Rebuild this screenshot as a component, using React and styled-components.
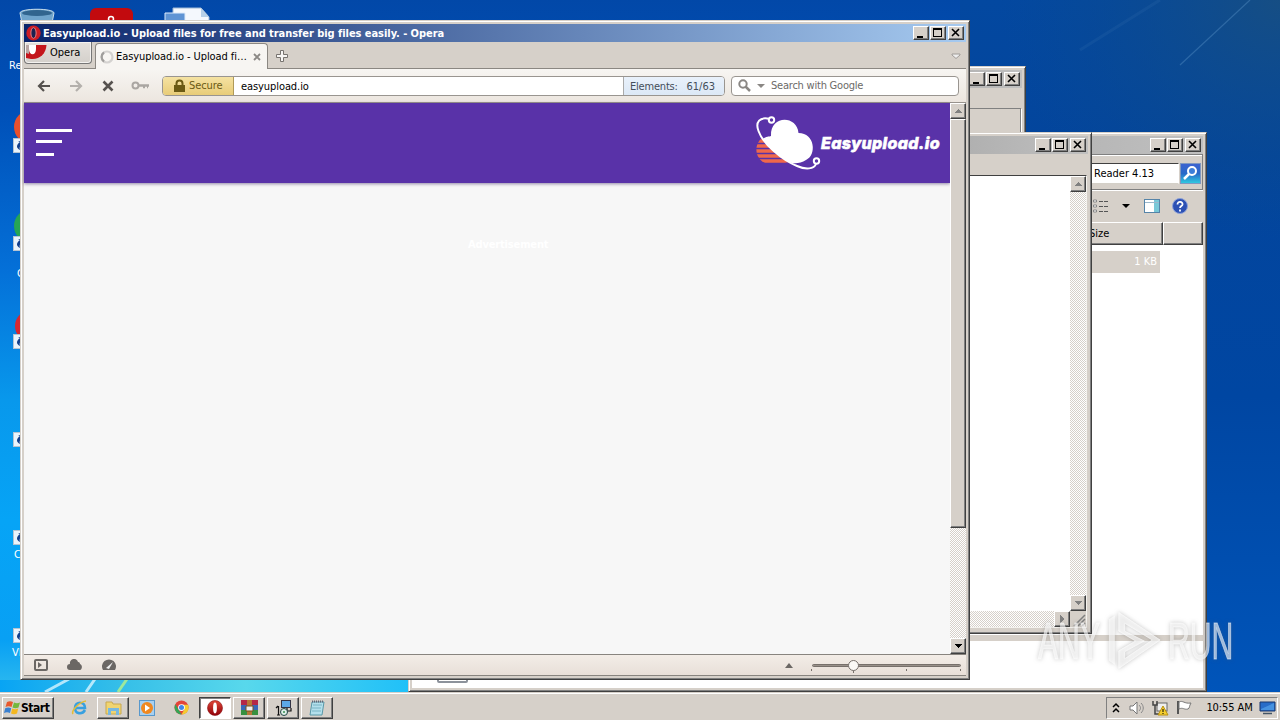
import React from 'react';
import styled, { createGlobalStyle, css } from 'styled-components';

const Global = createGlobalStyle`
  * { box-sizing: border-box; }
  html, body { margin: 0; width: 1280px; height: 720px; overflow: hidden; }
  body { font-family: "DejaVu Sans Condensed", "DejaVu Sans", sans-serif; font-size: 11px; color: #000; }
  svg { display: block; flex: none; }
`;

const FACE = '#d6d0c9';

const raised = css`
  background: ${FACE};
  border: 1px solid;
  border-color: #fff #404040 #404040 #fff;
  box-shadow: inset -1px -1px 0 #808080;
`;

const Screen = styled.div`
  position: relative;
  width: 1280px;
  height: 720px;
  overflow: hidden;
  display: flex;
  flex-direction: column;
  justify-content: flex-end;
  background: linear-gradient(180deg, #0248a8 0px, #0050b8 110px, #0470d8 270px, #0898ec 400px, #06a4f6 520px, #08a0f4 640px, #30bcee 692px);
`;
const Wallpaper = styled.svg`position: absolute; inset: 0;`;

const Window = styled.section`
  position: absolute;
  left: ${p => p.$x}px;
  top: ${p => p.$y}px;
  width: ${p => p.$w}px;
  height: ${p => p.$h}px;
  display: flex;
  flex-direction: column;
  padding: 2px;
  background: ${FACE};
  border: 1px solid;
  border-color: ${FACE} #404040 #404040 ${FACE};
  box-shadow: inset 1px 1px 0 #fff, inset -1px -1px 0 #808080;
  overflow: hidden;
`;
const Inner = styled.div`
  flex: 1;
  min-height: 0;
  display: flex;
  flex-direction: column;
  padding: 1px;
`;
const TitleBar = styled.header`
  height: 18px;
  flex: none;
  display: flex;
  align-items: center;
  padding: 0 2px;
  background: ${p => p.$active ? 'linear-gradient(90deg, #0a246a, #a6caf0)' : 'linear-gradient(90deg, #808080, #c0c0c0)'};
  color: #fff;
  font-weight: bold;
`;
const Title = styled.h1`
  flex: 1;
  margin: 0 0 0 2px;
  font: inherit;
  letter-spacing: -0.05px;
  white-space: nowrap;
`;
const Controls = styled.div`display: flex; margin-left: auto;`;
const ControlBtn = styled.button`
  ${raised}
  width: 16px;
  height: 14px;
  padding: 0;
  margin-left: ${p => p.$gap || 0}px;
`;

function WindowControls() {
  return (
    <Controls>
      <ControlBtn><svg width="14" height="12"><path d="M3 9h6v2H3z" /></svg></ControlBtn>
      <ControlBtn $gap={1}><svg width="14" height="12"><path d="M2 1h9v9H2zM3 3v6h7V3z" fillRule="evenodd" /></svg></ControlBtn>
      <ControlBtn $gap={2}><svg width="14" height="12"><path d="M3 2l7 7M10 2l-7 7" stroke="#000" strokeWidth="1.6" /></svg></ControlBtn>
    </Controls>
  );
}

const Label = styled.span`
  white-space: nowrap;
  letter-spacing: ${p => p.$ls || 0}px;
  color: ${p => p.$color || '#000'};
`;

/* tabs */
const TabStrip = styled.nav`
  height: 27px;
  flex: none;
  display: flex;
  align-items: flex-end;
  border-bottom: 1px solid #8b8782;
  background: ${FACE};
`;
const OperaButton = styled.button`
  align-self: flex-start;
  width: 68px;
  height: 22px;
  padding: 0 0 1px;
  display: flex;
  align-items: center;
  gap: 3px;
  border: 1px solid #777;
  border-top: 0;
  border-radius: 0 0 4px 4px;
  background: linear-gradient(#e4e0dc, #d4d0cb);
  box-shadow: inset 0 0 0 1px #f4f2f0;
  font: inherit;
`;
const Tab = styled.div`
  width: 173px;
  height: 26px;
  margin: 0 0 -1px 3px;
  display: flex;
  align-items: center;
  padding-left: 4px;
  gap: 2px;
  border: 1px solid #8b8782;
  border-bottom: 0;
  border-radius: 4px 4px 0 0;
  background: #f7f5f2;
`;
const Spacer = styled.div`flex: 1;`;
const Slot = styled.div`
  display: flex;
  align-items: center;
  justify-content: center;
  width: ${p => p.$w}px;
  height: ${p => p.$h || 24}px;
  flex: none;
`;

/* toolbar */
const AddressRow = styled.div`
  height: 34px;
  flex: none;
  display: flex;
  align-items: center;
  padding: 0 7px 0 4px;
  background: linear-gradient(#f7f5f2, #ece6df);
  border-bottom: 1px solid #98938d;
`;
const AddressBox = styled.div`
  width: 563px;
  height: 20px;
  margin-left: 6px;
  display: flex;
  overflow: hidden;
  border: 1px solid #999590;
  border-radius: 4px;
  background: #fff;
`;
const Secure = styled.div`
  width: 71px;
  display: flex;
  align-items: center;
  gap: 4px;
  padding-left: 11px;
  border-right: 1px solid #b09a58;
  background: linear-gradient(#f5e2a2, #e8cc78);
`;
const Url = styled.div`flex: 1; padding-left: 7px; line-height: 19px;`;
const Elements = styled.div`
  width: 101px;
  display: flex;
  align-items: center;
  justify-content: space-between;
  padding: 2px 9px 0 6px;
  border-left: 1px solid #aaa;
  background: linear-gradient(#e9f1fb, #dce8f6);
`;
const SearchBox = styled.div`
  width: 228px;
  height: 20px;
  margin-left: 6px;
  display: flex;
  align-items: center;
  border: 1px solid #999590;
  border-radius: 4px;
  background: #fff;
  padding-left: 6px;
`;

/* page */
const Viewport = styled.div`
  flex: 1;
  min-height: 0;
  display: flex;
  background: #f7f7f7;
`;
const Page = styled.main`flex: 1; display: flex; flex-direction: column;`;
const Hero = styled.div`
  height: 80px;
  display: flex;
  align-items: center;
  justify-content: space-between;
  padding: 0 10px 0 12px;
  background: #5932a8;
  box-shadow: 0 1px 3px rgba(50, 30, 90, .5);
`;
const Burger = styled.div`display: flex; flex-direction: column; padding-bottom: 2px;`;
const Bar = styled.i`
  width: ${p => p.$w}px;
  height: 3px;
  margin-bottom: ${p => p.$mb || 0}px;
  background: #fff;
`;
const Brand = styled.div`display: flex; align-items: center;`;
const BrandName = styled.span`
  width: 119px;
  white-space: nowrap;
  font: italic 800 16px/20px Inter, sans-serif;
  letter-spacing: 0.35px;
  color: #fff;
  -webkit-text-stroke: 0.6px #fff;
`;
const Faint = styled.p`
  margin: 55px 0 0 444px;
  line-height: 14px;
  color: #fff;
  font-weight: bold;
  letter-spacing: -0.15px;
`;

/* scroll bars */
const Track = styled.div`
  display: flex;
  flex: ${p => p.$row ? 1 : 'none'};
  flex-direction: ${p => p.$row ? 'row' : 'column'};
  justify-content: ${p => p.$row ? 'flex-end' : 'space-between'};
  ${p => p.$row ? 'height: 16px;' : 'width: 16px;'}
  background: repeating-conic-gradient(#fff 0 25%, ${FACE} 0 50%) 0 0 / 2px 2px;
`;
const ArrowBtn = styled.button`
  ${raised}
  width: 16px;
  height: 16px;
  padding: 0;
  flex: none;
`;
const Thumb = styled.div`
  ${raised}
  height: 409px;
  margin-bottom: auto;
`;
function Arrow({ dir, color = '#808080' }) {
  const d = { up: 'M3 9h8L7 5z', down: 'M3 5h8L7 9z', right: 'M5 3v8l4-4z' }[dir];
  return <ArrowBtn><svg width="14" height="14" shapeRendering="crispEdges"><path d={d} fill={color} /></svg></ArrowBtn>;
}

const StatusBar = styled.footer`
  height: 22px;
  flex: none;
  display: flex;
  align-items: center;
  padding: 0 0 0 9px;
  border-top: 1px solid #88847f;
  border-bottom: 1px solid #88847f;
  background: linear-gradient(#f3ede7, #e8dfd8);
`;

/* windows behind */
const Sheet = styled.div`
  flex: 1;
  min-height: 0;
  margin: ${p => p.$mt || 0}px 1px 2px 0;
  display: flex;
  flex-direction: column;
  background: #fff;
  border: 1px solid #404040;
  border-color: #404040 #f4f2ee #f4f2ee #404040;
`;
const SheetRow = styled.div`flex: 1; display: flex; justify-content: flex-end;`;
const BottomRow = styled.div`display: flex; background: ${FACE};`;
const Panel = styled.div`
  margin: 20px 1px 0 0;
  height: 60px;
  border: 1px solid #808080;
  box-shadow: 1px 1px 0 #fff;
`;
const SearchRow = styled.div`
  height: 36px;
  flex: none;
  display: flex;
  align-items: center;
  justify-content: flex-end;
  gap: 1px;
  padding: 2px 1px 0 0;
  border: 1px solid #808080;
  border-left: 0;
  box-shadow: inset 0 1px #fff, 0 1px #fff;
`;
const Field = styled.div`
  width: 100px;
  height: 21px;
  padding-left: 14px;
  line-height: 19px;
  background: #fff;
  border: 1px solid #404040;
  border-color: #404040 #fff #d4d0c8 #404040;
`;
const SearchBtn = styled.div`
  width: 21px;
  height: 21px;
  border: 1px solid #8098c0;
  background: linear-gradient(#3c63d0, #286ac8 50%, #30c8e0);
`;
const IconRow = styled.div`
  height: 32px;
  flex: none;
  display: flex;
  align-items: center;
  justify-content: flex-end;
  padding-right: 3px;
`;
const HeaderRow = styled.div`display: flex; flex: none; justify-content: flex-end; height: 23px;`;
const HeaderCell = styled.div`
  ${raised}
  width: ${p => p.$w}px;
  padding-left: 15px;
  line-height: 22px;
`;
const List = styled.div`flex: 1; padding: 6px 43px 0 0; background: #fff;`;
const SelectedRow = styled.div`
  height: 22px;
  padding-right: 3px;
  line-height: 22px;
  text-align: right;
  color: #fff;
  background: ${FACE};
`;
const Details = styled.div`
  height: 53px;
  flex: none;
  padding-left: 25px;
  display: flex;
  align-items: flex-end;
  background: #fff;
  border-top: 6px solid ${FACE};
`;
const FileEdge = styled.div`width: 31px; height: 10px; margin-bottom: 5px; border: 2px solid #8c929b; border-radius: 2px;`;

/* desktop icons peeking out */
const Peek = styled.div`
  position: absolute;
  left: ${p => p.$x}px;
  top: ${p => p.$y}px;
  color: #fff;
  white-space: nowrap;
`;

/* taskbar */
const Taskbar = styled.footer`
  position: relative;
  height: 28px;
  display: flex;
  align-items: center;
  padding: 2px 2px 0;
  background: ${FACE};
  border-top: 1px solid ${FACE};
  box-shadow: inset 0 1px #fff;
`;
const StartBtn = styled.button`
  ${raised}
  width: 52px;
  height: 22px;
  padding: 0 0 0 1px;
  display: flex;
  align-items: center;
  font: bold 12px "DejaVu Sans Condensed", sans-serif;
  letter-spacing: -0.45px;
  margin-right: 9px;
`;
const Task = styled.button`
  width: 32px;
  height: 22px;
  padding: 0;
  margin-right: 2px;
  display: flex;
  align-items: center;
  justify-content: center;
  border: 1px solid transparent;
  background: transparent;
  ${p => p.$open && raised}
  ${p => p.$active && css`background: #fff; border: 1px solid; border-color: #404040 #fff #fff #404040; box-shadow: inset 1px 1px #808080;`}
`;
const Tray = styled.div`
  margin-left: auto;
  width: 172px;
  height: 22px;
  display: flex;
  align-items: center;
  padding-left: 3px;
  border: 1px solid;
  border-color: #808080 #fff #fff #808080;
`;

const Watermark = styled.div`
  position: absolute;
  left: 1038px;
  top: 609px;
  display: flex;
  align-items: center;
  color: rgba(255, 255, 255, .6);
  filter: drop-shadow(0 0 2px rgba(90, 90, 90, .5));
`;
const MarkWord = styled.span`
  display: block;
  width: ${p => p.$w}px;
  font: 52px/64px "Liberation Sans", sans-serif;
  -webkit-text-stroke: 1px rgba(255, 255, 255, .5);
  transform: scaleX(.58);
  transform-origin: 0 50%;
  white-space: nowrap;
`;

function OperaO({ size }) {
  return (
    <svg width={size} height={size} viewBox="0 0 16 16">
      <defs><linearGradient id="op" x2="0" y2="1"><stop stopColor="#e04838" /><stop offset="1" stopColor="#900008" /></linearGradient></defs>
      <circle cx="8" cy="8" r="7.5" fill="url(#op)" stroke="#8c1014" strokeWidth=".6" />
      <ellipse cx="8" cy="8" rx="1.9" ry="5.4" fill="#fff" />
    </svg>
  );
}

function TitleOpera() {
  return (
    <svg width="15" height="16" viewBox="0 0 15 16">
      <ellipse cx="7.5" cy="8" rx="7.2" ry="7.6" fill="#cc1c24" />
      <ellipse cx="7.5" cy="8" rx="2.6" ry="5.4" fill="#1c2050" stroke="#f08888" strokeWidth=".9" />
    </svg>
  );
}

function Shortcut() {
  return (
    <svg width="12" height="15">
      <rect x=".5" y=".5" width="11" height="14" fill="#eaf4fc" stroke="#b6c4d2" />
      <path d="M9 3H5l2 1c-4 3-4 6 0 8-1-3 0-4 2-5l2 2z" fill="#123f8c" />
    </svg>
  );
}

function Logo() {
  return (
    <svg width="66" height="56" viewBox="0 0 66 56">
      <defs><clipPath id="sun"><path d="M8 22C0 28 0 38 4 43C9 51 22 51 34 47L34 46C24 40 14 31 8 22Z" /></clipPath></defs>
      <g clipPath="url(#sun)" stroke="#f0684a" strokeWidth="3.400">
        <path d="M0 26h40M0 31h40M0 36h40M0 41h40M0 46h40" />
      </g>
      <path d="M8 24C11 21 14 22 16 21C15 0 42 0 43.500 18C60 18 62 40 51 45C45 49 38 49 34 47C24 41 14 33 8 24Z" fill="#fff" />
      <path d="M14.500 4C5 1.500 0 7 3.500 16C8 29 27 45 42 51C51 55 59 54 61 49" fill="none" stroke="#fff" strokeWidth="2" />
      <circle cx="16.500" cy="5" r="2.700" fill="#5932a8" stroke="#fff" strokeWidth="2" />
      <circle cx="61.500" cy="46" r="2.700" fill="#5932a8" stroke="#fff" strokeWidth="2" />
    </svg>
  );
}

function Browser() {
  return (
    <Window $x={20} $y={20} $w={950} $h={660}>
      <Inner>
        <TitleBar $active>
          <TitleOpera />
          <Title>Easyupload.io - Upload files for free and transfer big files easily. - Opera</Title>
          <WindowControls />
        </TitleBar>
        <TabStrip>
          <OperaButton>
            <svg width="22" height="20" viewBox="0 0 22 20">
              <path d="M1 3h20.500C21 12 14 18 6 17L1 16z" fill="#c4161c" />
              <path d="M1 3h3v9l-3-1z" fill="#b9a6a4" />
              <path d="M4 3h7v4c0 7-7 7-7 0z" fill="#fff" />
            </svg>
            <Label>Opera</Label>
          </OperaButton>
          <Tab>
            <svg width="14" height="14"><circle cx="7" cy="7" r="5.500" fill="none" stroke="#d4d2d0" strokeWidth="2.200" /><path d="M4 2.500a5.500 5.500 0 0 0 0 9" fill="none" stroke="#a09e9c" strokeWidth="2.200" /></svg>
            <Label $ls={-0.08}>Easyupload.io - Upload fi…</Label>
            <Slot $w={16}><svg width="8" height="8"><path d="M1 1l6 6M7 1l-6 6" stroke="#8c8986" strokeWidth="1.800" /></svg></Slot>
          </Tab>
          <Slot $w={27}><svg width="14" height="14"><path d="M5.500 1.500h3v4h4v3h-4v4h-3v-4h-4v-3h4z" fill="#f8f6f4" stroke="#77736f" /></svg></Slot>
          <Spacer />
          <Slot $w={20}><svg width="10" height="7"><path d="M1 1h8v1L5 5.500 1 2z" fill="#eee" stroke="#a09c98" /></svg></Slot>
        </TabStrip>
        <AddressRow>
          <Slot $w={32}><svg width="14" height="12"><path d="M13 6H2M7 1L2 6l5 5" fill="none" stroke="#56524f" strokeWidth="2.200" /></svg></Slot>
          <Slot $w={31}><svg width="14" height="12"><path d="M1 6h11M7 1l5 5-5 5" fill="none" stroke="#b4b0ac" strokeWidth="2.200" /></svg></Slot>
          <Slot $w={33}><svg width="12" height="12"><path d="M1.500 1.500l9 9M10.500 1.500l-9 9" stroke="#56524f" strokeWidth="2.600" /></svg></Slot>
          <Slot $w={32}><svg width="18" height="9"><circle cx="4.500" cy="4.500" r="3" fill="none" stroke="#aaa6a2" strokeWidth="2" /><path d="M7 4.500h11M12 6h2M16 6h1" stroke="#aaa6a2" strokeWidth="2.600" /></svg></Slot>
          <AddressBox>
            <Secure>
              <svg width="11" height="14"><path d="M2.500 6V4.500a3 3 0 0 1 6 0V6" fill="none" stroke="#6b5a14" strokeWidth="2" /><path d="M0 6h11v7H0z" fill="#6b5a14" /></svg>
              <Label $color="#6b5a14" $ls={-0.1}>Secure</Label>
            </Secure>
            <Url><Label $ls={-0.08}>easyupload.io</Label></Url>
            <Elements><Label $color="#444e5a" $ls={-0.2}>Elements:</Label><Label $color="#444e5a">61/63</Label></Elements>
          </AddressBox>
          <SearchBox>
            <svg width="13" height="13"><circle cx="5" cy="5" r="3.700" fill="none" stroke="#8a8784" strokeWidth="2" /><path d="M7.500 7.500l4.500 4.500" stroke="#8a8784" strokeWidth="2.500" /></svg>
            <Slot $w={20}><svg width="8" height="4"><path d="M0 0h8L4 4z" fill="#8a8784" /></svg></Slot>
            <Label $color="#6c6a68" $ls={-0.22}>Search with Google</Label>
          </SearchBox>
        </AddressRow>
        <Viewport>
          <Page>
            <Hero>
              <Burger><Bar $w={36} $mb={8} /><Bar $w={26} $mb={10} /><Bar $w={18} /></Burger>
              <Brand><Logo /><BrandName>Easyupload.io</BrandName></Brand>
            </Hero>
            <Faint>Advertisement</Faint>
          </Page>
          <Track><Arrow dir="up" /><Thumb /><Arrow dir="down" color="#000" /></Track>
        </Viewport>
        <StatusBar>
          <svg width="16" height="12"><rect x="2" y="1" width="12" height="10" rx="1" fill="none" stroke="#6b6764" strokeWidth="2" /><path d="M5 3l4 3-4 3z" fill="#6b6764" /></svg>
          <Slot $w={52}><svg width="16" height="12"><path d="M3 11a3 3 0 0 1 0-6 4 4 0 0 1 8-2c2 0 2 2 2 2 3 1 2 6 0 6z" fill="#6b6764" /></svg></Slot>
          <svg width="16" height="12"><path d="M2 11a7 7 0 1 1 12 0z" fill="#6b6764" /><path d="M5 9l7-6-4 7z" fill="#eee" /></svg>
          <Spacer />
          <Slot $w={28} $h={20}><svg width="8" height="5"><path d="M0 5h8L4 0z" fill="#6b6764" /></svg></Slot>
          <svg width="163" height="18">
            <rect x="9.500" y="8.500" width="148" height="2" rx="1" fill="#989089" stroke="#77706b" />
            <path d="M8.500 13v2M50.500 14v3M103.500 13v2M157.500 13v2" stroke="#77706b" />
            <circle cx="50.500" cy="9.500" r="5" fill="#faf8f5" stroke="#77706b" />
          </svg>
        </StatusBar>
      </Inner>
    </Window>
  );
}

function Explorer() {
  return (
    <Window $x={408} $y={132} $w={799} $h={560}>
      <Inner>
        <TitleBar><WindowControls /></TitleBar>
        <SearchRow>
          <Field><Label>Reader 4.13</Label></Field>
          <SearchBtn><svg width="19" height="19"><circle cx="11" cy="7" r="4" fill="#3d7ed8" stroke="#fff" strokeWidth="2" /><path d="M8 10l-5 5" stroke="#fff" strokeWidth="2.500" /></svg></SearchBtn>
        </SearchRow>
        <IconRow>
          <svg width="18" height="14"><path d="M1.500 1h3v2h-3zM1.500 6h3v2h-3zM1.500 11h3v2h-3z" fill="#fff" stroke="#888" /><path d="M7 2.500h9M7 7.500h9M7 12.500h9" stroke="#555" strokeDasharray="4 1" /></svg>
          <Slot $w={32}><svg width="8" height="4"><path d="M0 0h8L4 4z" /></svg></Slot>
          <svg width="18" height="14"><rect x="2.500" y=".5" width="15" height="13" fill="#fff" stroke="#5684a8" /><path d="M12 1h5v12h-5z" fill="#78c8d8" /><path d="M3 3.500h14" stroke="#9bb8cc" /></svg>
          <Slot $w={40}><svg width="16" height="16"><circle cx="8" cy="8" r="7.500" fill="#2c50b4" stroke="#8ca0d8" /><path d="M5.500 6.500c0-4 5.500-3 5 0-.3 1.500-2.500 1.500-2.500 3.500M8 11.500v2" fill="none" stroke="#fff" strokeWidth="1.800" /></svg></Slot>
        </IconRow>
        <HeaderRow><HeaderCell $w={90}>Size</HeaderCell><HeaderCell $w={40} /></HeaderRow>
        <List><SelectedRow>1 KB</SelectedRow></List>
        <Details><FileEdge /></Details>
      </Inner>
    </Window>
  );
}

export default function App() {
  return (
    <>
      <Global />
      <Screen>
        <Wallpaper width="1280" height="720">
          <defs>
            <linearGradient id="right" x2="0" y2="1"><stop stopColor="#0348a0" /><stop offset=".2" stopColor="#03459c" /><stop offset=".55" stopColor="#0046a2" /><stop offset="1" stopColor="#0056bc" /></linearGradient>
            <radialGradient id="corner" cx="1" cy="0" r="1"><stop stopColor="#164e84" /><stop offset="1" stopColor="#0a4a90" stopOpacity="0" /></radialGradient>
            <linearGradient id="low"><stop stopColor="#08a4f4" /><stop offset=".3" stopColor="#36bfe8" /><stop offset=".6" stopColor="#58d8ec" /><stop offset="1" stopColor="#20c0f8" /></linearGradient>
          </defs>
          <rect x="960" width="320" height="720" fill="url(#right)" />
          <rect x="1000" width="280" height="240" fill="url(#corner)" />
          <path d="M1180 65L1250 0" stroke="#5b94c8" strokeWidth="1.200" opacity=".4" />
          <path d="M1080 50L1160 0" stroke="#4880b8" strokeWidth="3" opacity=".14" />
          <rect y="680" width="409" height="12" fill="url(#low)" />
          <path d="M45 692l24-13M86 692l9-13" stroke="#d9f5ff" strokeWidth="3" opacity=".8" />
          <path d="M118 692l9-13" stroke="#9ce89c" strokeWidth="3" />
          <path d="M20 13c0-5 34-5 34 0l-2 10H22z" fill="#6fa4cc" stroke="#c6dcea" />
          <ellipse cx="37" cy="13" rx="15" ry="3" fill="#31658f" />
          <rect x="90" y="8" width="43" height="22" rx="6" fill="#c20a0e" />
          <circle cx="111" cy="19" r="2.500" fill="none" stroke="#fff" strokeWidth="1.500" />
          <path d="M173 8h28l8 9v9h-36z" fill="#f4f8fd" stroke="#9eb8d4" />
          <path d="M201 8v9h8z" fill="#b6d0e8" /><path d="M165 13h20v10h-20z" fill="#5f94d4" stroke="#dceafa" />
          <circle cx="31" cy="127" r="17" fill="#e8502c" />
          <circle cx="31" cy="226" r="17" fill="#26a554" />
          <circle cx="31" cy="326" r="16" fill="#d82830" />
        </Wallpaper>
        <Peek $x={9} $y={59}>Recycle Bin</Peek>
        <Peek $x={17} $y={267}>Chrome</Peek>
        <Peek $x={14} $y={548}>CCleaner</Peek>
        <Peek $x={12} $y={646}>VLC media</Peek>
        {[138, 236, 334, 432, 530, 628].map(y => <Peek key={y} $x={13} $y={y}><Shortcut /></Peek>)}

        <Window $x={700} $y={66} $w={326} $h={200}>
          <Inner><TitleBar><WindowControls /></TitleBar><Panel /></Inner>
        </Window>
        <Explorer />
        <Window $x={600} $y={132} $w={492} $h={502}>
          <Inner>
            <TitleBar><WindowControls /></TitleBar>
            <Sheet $mt={21}>
              <SheetRow><Track><Arrow dir="up" /><Arrow dir="down" /></Track></SheetRow>
              <BottomRow>
                <Track $row><Arrow dir="right" /></Track>
                <svg width="16" height="16"><path d="M4 15L15 4M8 15l7-7M12 15l3-3" stroke="#808080" strokeWidth="1.500" /></svg>
              </BottomRow>
            </Sheet>
          </Inner>
        </Window>
        <Browser />

        <Taskbar>
          <StartBtn>
            <svg width="17" height="16" viewBox="0 0 17 16"><path d="M3 2c2-1 4-1 6 0L7.500 7c-2-1-4-1-6 0z" fill="#e8582c" /><path d="M10 2.500c2 1 4 1 6 0L14.500 7.500c-2 1-4 1-6 0z" fill="#74b83c" /><path d="M1.200 8.200c2-1 4-1 6 0L6 13c-2-1-4-1-6 0z" fill="#3a80d0" /><path d="M8.200 8.500c2 1 4 1 6 0L13 13.500c-2 1-4 1-6 0z" fill="#f4b820" /></svg>
            Start
          </StartBtn>
          <Task><svg width="17" height="17" viewBox="0 0 17 17"><path d="M14 11c-3 5-10 4-10-2 0-7 10-7 10 0H5" fill="none" stroke="#38a0e0" strokeWidth="2.600" /><path d="M2 15C0 12 8 3 15 2" fill="none" stroke="#e4bc38" strokeWidth="1.600" /></svg></Task>
          <Task $open><svg width="17" height="16"><path d="M1 2h6l1 2h8v10H1z" fill="#f0d470" stroke="#c8a850" /><path d="M3 8h11v7h-3v-4H6v4H3z" fill="#78b8e0" /></svg></Task>
          <Task><svg width="16" height="16"><rect x=".5" y=".5" width="15" height="15" fill="#a8d0f0" stroke="#5898cc" /><circle cx="8" cy="8" r="6" fill="#f08820" /><path d="M6 4.500l5 3.500-5 3.500z" fill="#fff" /></svg></Task>
          <Task><svg width="15" height="15" viewBox="0 0 16 16"><circle cx="8" cy="8" r="7.500" fill="#e3443a" /><path d="M1.500 4.500L8 15.500A7.500 7.500 0 0 1 1.500 4.500z" fill="#35a455" /><path d="M8 5h7a7.500 7.500 0 0 1-7 10.500L11 10z" fill="#f5cc30" /><circle cx="8" cy="8" r="3.600" fill="#fff" /><circle cx="8" cy="8" r="2.700" fill="#4285e8" /></svg></Task>
          <Task $active><OperaO size={16} /></Task>
          <Task $open><svg width="17" height="15"><path d="M0 0h17v5H0z" fill="#b42848" /><path d="M0 5h17v5H0z" fill="#3868b8" /><path d="M0 10h17v5H0z" fill="#389040" /><path d="M6 0h5v15H6z" fill="#b87838" /><path d="M5 6h7v5H5z" fill="#eee" stroke="#765020" /></svg></Task>
          <Task $open><svg width="17" height="16"><rect x="6.500" y=".5" width="9" height="7" fill="#5ca8e8" stroke="#334" /><path d="M3.500 6v9M1 8l2-2M2 15h3M12 8v3h4V8" fill="none" stroke="#111" strokeWidth="1.200" /><circle cx="9" cy="12" r="3.500" fill="#dff0e8" stroke="#244" /><circle cx="9" cy="12" r="1" fill="#389050" /></svg></Task>
          <Task $open><svg width="16" height="16"><path d="M3 2h12l-2 13H1z" fill="#b4e0ec" stroke="#5898a8" /><path d="M4 5h9M3 8h9M3 11h9" stroke="#78b4c4" /><path d="M3 1.500h12" stroke="#667" strokeDasharray="1 1" strokeWidth="2" /></svg></Task>
          <Tray>
            <svg width="12" height="12"><path d="M3 5l3-3 3 3M3 10l3-3 3 3" fill="none" stroke="#000" strokeWidth="1.500" /></svg>
            <Slot $w={30} $h={20}><svg width="16" height="14"><path d="M1 5h3l4-4v12L4 9H1z" fill="#fff" stroke="#777" /><path d="M10 4c2 2 2 4 0 6M12 2c3 3 3 7 0 10" fill="none" stroke="#888" /></svg></Slot>
            <svg width="17" height="16"><rect x="5" y="3" width="10" height="8" fill="#eee" stroke="#666" /><path d="M1 1v4h4V1M3 5v9h4" fill="none" stroke="#444" strokeWidth="1.500" /><path d="M11 6l5 9H6z" fill="#f5ce2e" stroke="#b99010" /><path d="M11 9v3M11 13v1" stroke="#000" /></svg>
            <Slot $w={31} $h={20}><svg width="17" height="15"><path d="M2 1v13" stroke="#555" strokeWidth="2" /><path d="M3 2c4-2 5 2 12 1-2 3-1 5-3 6-4 1-5-2-9 0z" fill="#fff" stroke="#777" /></svg></Slot>
            <Slot $w={59} $h={20}><Label $ls={-0.1}>10:55 AM</Label></Slot>
            <svg width="17" height="14"><path d="M1 1h15v9H1z" fill="#286cc8" stroke="#18366c" /><path d="M2 8l13-6v7H2z" fill="#5cacf0" opacity=".6" /><path d="M4 12.500h9" stroke="#456" strokeWidth="1.500" /></svg>
          </Tray>
        </Taskbar>

        <Watermark>
          <MarkWord $w={65}>ANY</MarkWord>
          <svg width="65" height="64" viewBox="0 0 66 64"><path d="M16 3L58 31 16 60V42l17-10-17-10zM22 14v8l20 10-20 11v7L50 31z" fill="#fff" fillOpacity=".65" fillRule="evenodd" stroke="#fff" strokeOpacity=".6" /><path d="M6 10l6-4v50l-6-4z" fill="#fff" fillOpacity=".65" /></svg>
          <MarkWord $w={65}>RUN</MarkWord>
        </Watermark>
      </Screen>
    </>
  );
}
